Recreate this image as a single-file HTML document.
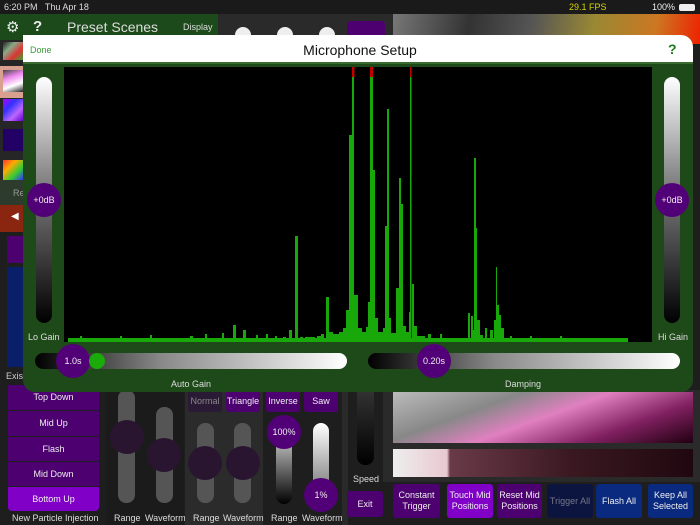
<!DOCTYPE html>
<html><head><meta charset="utf-8"><style>
*{margin:0;padding:0;box-sizing:border-box}
body{width:700px;height:525px;overflow:hidden;background:#1e1e1e;font-family:"Liberation Sans",sans-serif;position:relative;color:#fff}
.a{position:absolute}
.t{position:absolute;font-size:9px;color:#ddd;text-align:center;white-space:nowrap}
.pb{position:absolute;background:#4d0070;color:#eee;font-size:9px;display:flex;align-items:center;justify-content:center;text-align:center;line-height:11px;border-radius:3px}
.knob{position:absolute;border-radius:50%;background:#520078;color:#eee;font-size:9px;display:flex;align-items:center;justify-content:center}
.dk{position:absolute;border-radius:50%;background:#2a1530}
.tr{position:absolute;border-radius:8px;background:#555}
</style></head><body>
<!-- status bar -->
<div class="a" style="left:0;top:0;width:700px;height:14px;background:#1a1a1a"></div>
<div class="t" style="left:4px;top:2px;font-size:9px;color:#ddd">6:20 PM&nbsp;&nbsp; Thu Apr 18</div>
<div class="t" style="left:569px;top:2px;color:#d4d400">29.1 FPS</div>
<div class="t" style="left:652px;top:2px;color:#eee">100%</div>
<div class="a" style="left:679px;top:4px;width:16px;height:7px;background:#eee;border-radius:2px"></div>
<!-- top bg -->
<div class="a" style="left:0;top:14px;width:218px;height:26px;background:#1c4a1a"></div>
<div class="t" style="left:6px;top:18px;font-size:15px;color:#eee">⚙</div>
<div class="t" style="left:33px;top:18px;font-size:15px;color:#eee;font-weight:bold">?</div>
<div class="t" style="left:67px;top:19px;font-size:14px;color:#ddd">Preset Scenes</div>
<div class="t" style="left:183px;top:22px;font-size:9px;color:#ddd">Display</div>
<div class="a" style="left:218px;top:14px;width:175px;height:30px;background:#2a2a2a"></div>
<div class="a" style="left:235px;top:27px;width:16px;height:16px;border-radius:50%;background:#eee"></div>
<div class="a" style="left:277px;top:27px;width:16px;height:16px;border-radius:50%;background:#eee"></div>
<div class="a" style="left:319px;top:27px;width:16px;height:16px;border-radius:50%;background:#eee"></div>
<div class="a" style="left:347px;top:21px;width:38px;height:20px;background:#4d0070;border-radius:3px"></div>
<div class="a" style="left:393px;top:14px;width:307px;height:30px;background:linear-gradient(100deg,#777 0%,#333 25%,#555 45%,#998833 65%,#cc7722 85%,#ee2200 100%)"></div>
<!-- left column bg -->
<div class="a" style="left:0;top:40px;width:23px;height:150px;background:#262626"></div>
<div class="a" style="left:3px;top:42px;width:20px;height:18px;background:linear-gradient(135deg,#222,#8a8,#d33,#3a3)"></div>
<div class="a" style="left:0;top:66px;width:23px;height:32px;background:#d9a090"></div>
<div class="a" style="left:3px;top:70px;width:20px;height:22px;background:linear-gradient(160deg,#444,#e8e,#fff,#222)"></div>
<div class="a" style="left:3px;top:99px;width:20px;height:22px;background:linear-gradient(135deg,#a0f,#33f,#b6f,#60c)"></div>
<div class="a" style="left:3px;top:129px;width:20px;height:22px;background:#206"></div>
<div class="a" style="left:3px;top:160px;width:20px;height:20px;background:linear-gradient(135deg,#f33,#fa0,#3c3,#33f)"></div>
<div class="a" style="left:0;top:180px;width:23px;height:25px;background:#2c3b2c"></div>
<div class="t" style="left:13px;top:188px;color:#999">Re</div>
<div class="a" style="left:0;top:205px;width:23px;height:27px;background:#8a2510"></div>
<div class="t" style="left:11px;top:211px;font-size:10px;color:#fff">◀</div>
<div class="a" style="left:7px;top:236px;width:16px;height:27px;background:#4d0070"></div>
<div class="a" style="left:7px;top:267px;width:16px;height:100px;background:#0a1f6a"></div>
<div class="t" style="left:6px;top:371px;color:#ccc">Exist</div>
<!-- bottom left buttons -->
<div class="pb" style="left:8px;top:385px;width:91px;height:25px;border-radius:0">Top Down</div>
<div class="pb" style="left:8px;top:411px;width:91px;height:25px;border-radius:0">Mid Up</div>
<div class="pb" style="left:8px;top:437px;width:91px;height:24px;border-radius:0">Flash</div>
<div class="pb" style="left:8px;top:462px;width:91px;height:24px;border-radius:0">Mid Down</div>
<div class="pb" style="left:8px;top:487px;width:91px;height:24px;background:#8000c8;border-radius:0 0 4px 4px">Bottom Up</div>
<div class="t" style="left:12px;top:513px;font-size:9px">New Particle Injection</div>
<!-- middle sliders -->
<div class="a" style="left:106px;top:390px;width:78px;height:135px;background:#1b1b1b"></div>
<div class="tr" style="left:118px;top:390px;width:17px;height:113px"></div>
<div class="tr" style="left:156px;top:407px;width:17px;height:96px"></div>
<div class="dk" style="left:110px;top:420px;width:34px;height:34px"></div>
<div class="dk" style="left:147px;top:438px;width:34px;height:34px"></div>
<div class="t" style="left:114px;top:513px">Range</div>
<div class="t" style="left:145px;top:513px">Waveform</div>
<div class="a" style="left:185px;top:390px;width:78px;height:135px;background:#2b2b2b"></div>
<div class="pb" style="left:188px;top:390px;width:34px;height:22px;background:#2a1a35;color:#888">Normal</div>
<div class="pb" style="left:226px;top:390px;width:34px;height:22px">Triangle</div>
<div class="tr" style="left:197px;top:423px;width:17px;height:80px"></div>
<div class="tr" style="left:234px;top:423px;width:17px;height:80px"></div>
<div class="dk" style="left:188px;top:446px;width:34px;height:34px"></div>
<div class="dk" style="left:226px;top:446px;width:34px;height:34px"></div>
<div class="t" style="left:193px;top:513px">Range</div>
<div class="t" style="left:223px;top:513px">Waveform</div>
<div class="pb" style="left:266px;top:390px;width:34px;height:22px">Inverse</div>
<div class="pb" style="left:304px;top:390px;width:34px;height:22px">Saw</div>
<div class="a" style="left:276px;top:430px;width:16px;height:74px;border-radius:8px;background:linear-gradient(#ddd,#000)"></div>
<div class="a" style="left:313px;top:423px;width:16px;height:80px;border-radius:8px;background:linear-gradient(#fff,#666)"></div>
<div class="knob" style="left:267px;top:415px;width:34px;height:34px">100%</div>
<div class="knob" style="left:304px;top:478px;width:34px;height:34px">1%</div>
<div class="t" style="left:271px;top:513px">Range</div>
<div class="t" style="left:302px;top:513px">Waveform</div>
<div class="a" style="left:342px;top:390px;width:6px;height:135px;background:#2a2a2a"></div>
<div class="a" style="left:357px;top:390px;width:17px;height:75px;border-radius:0 0 8px 8px;background:linear-gradient(#333,#000)"></div>
<div class="t" style="left:353px;top:474px">Speed</div>
<div class="pb" style="left:347px;top:491px;width:36px;height:26px">Exit</div>
<!-- right bottom -->
<div class="a" style="left:383px;top:390px;width:317px;height:92px;background:#2a2a2a"></div>
<div class="a" style="left:393px;top:392px;width:300px;height:51px;background:linear-gradient(160deg,#bbb 0%,#888 30%,#e080c0 50%,#802060 75%,#200010 100%)"></div>
<div class="a" style="left:393px;top:449px;width:300px;height:28px;background:linear-gradient(90deg,#eee 0%,#e8c8d0 18%,#6a3a48 19%,#3a1820 60%,#200810 100%)"></div>
<div class="pb" style="left:393px;top:484px;width:47px;height:34px">Constant<br>Trigger</div>
<div class="pb" style="left:447px;top:484px;width:46px;height:34px;background:#8000c8">Touch Mid<br>Positions</div>
<div class="pb" style="left:497px;top:484px;width:45px;height:34px">Reset Mid<br>Positions</div>
<div class="pb" style="left:547px;top:484px;width:46px;height:34px;background:#0c1540;color:#778">Trigger All</div>
<div class="pb" style="left:596px;top:484px;width:46px;height:34px;background:#0a2a80">Flash All</div>
<div class="pb" style="left:648px;top:484px;width:45px;height:34px;background:#0a2a80">Keep All<br>Selected</div>
<!-- modal -->
<div class="a" style="left:23px;top:35px;width:670px;height:357px;background:#1e4a1a;border-radius:0 12px 12px 12px;overflow:hidden">
 <div class="a" style="left:0;top:0;width:670px;height:29px;background:#fff;border-bottom:2px solid #3a6a30"></div>
</div>
<div class="t" style="left:30px;top:45px;color:#3a9a3a;font-size:9px">Done</div>
<div class="t" style="left:280px;top:42px;color:#111;font-size:14px;width:160px">Microphone Setup</div>
<div class="t" style="left:668px;top:41px;color:#1a7a1a;font-size:14px;font-weight:bold">?</div>
<div class="a" style="left:64px;top:67px;width:588px;height:275px;background:#000"></div>
<svg class="a" style="left:64px;top:67px" width="588" height="275" viewBox="64 67 588 275">
<g fill="#19a80a">
<rect x="68" y="338" width="560" height="4"/>
<rect x="80" y="336" width="2" height="6"/><rect x="120" y="336" width="2" height="6"/><rect x="150" y="335" width="2" height="7"/>
<rect x="190" y="336" width="3" height="6"/><rect x="205" y="334" width="2" height="8"/><rect x="222" y="333" width="2" height="9"/>
<rect x="233" y="325" width="3" height="17"/><rect x="243" y="330" width="3" height="12"/><rect x="256" y="335" width="2" height="7"/>
<rect x="266" y="334" width="2" height="8"/><rect x="275" y="336" width="2" height="6"/>
<rect x="283" y="337" width="3" height="5"/><rect x="289" y="330" width="3" height="12"/><rect x="295" y="236" width="3" height="106"/>
<rect x="300" y="337" width="3" height="5"/><rect x="305" y="337" width="10" height="5"/><rect x="317" y="336" width="4" height="6"/><rect x="321" y="334" width="3" height="8"/>
<rect x="326" y="297" width="3" height="45"/><rect x="329" y="332" width="4" height="10"/><rect x="333" y="334" width="6" height="8"/>
<rect x="339" y="332" width="5" height="10"/><rect x="343" y="328" width="4" height="14"/><rect x="346" y="310" width="3" height="32"/>
<rect x="349" y="135" width="4" height="207"/><rect x="352" y="67" width="2" height="275"/><rect x="354" y="295" width="4" height="47"/>
<rect x="358" y="328" width="4" height="14"/><rect x="362" y="332" width="4" height="10"/><rect x="366" y="327" width="3" height="15"/>
<rect x="368" y="302" width="3" height="40"/><rect x="370" y="67" width="3" height="275"/><rect x="373" y="170" width="2" height="172"/>
<rect x="375" y="318" width="3" height="24"/><rect x="378" y="332" width="5" height="10"/><rect x="383" y="328" width="3" height="14"/>
<rect x="385" y="226" width="2" height="116"/><rect x="387" y="109" width="2" height="233"/><rect x="389" y="318" width="2" height="24"/>
<rect x="391" y="333" width="5" height="9"/><rect x="396" y="288" width="3" height="54"/><rect x="399" y="178" width="2" height="164"/><rect x="401" y="204" width="2" height="138"/>
<rect x="403" y="326" width="3" height="16"/><rect x="406" y="332" width="3" height="10"/><rect x="409" y="312" width="2" height="30"/>
<rect x="410" y="67" width="1.5" height="275"/><rect x="412" y="284" width="2" height="58"/><rect x="414" y="326" width="3" height="16"/>
<rect x="417" y="336" width="8" height="6"/><rect x="428" y="334" width="3" height="8"/><rect x="440" y="334" width="2" height="8"/>
<rect x="468" y="313" width="2" height="29"/><rect x="471" y="316" width="2" height="26"/><rect x="472" y="330" width="3" height="12"/>
<rect x="474" y="158" width="2" height="184"/><rect x="476" y="228" width="1" height="114"/><rect x="477" y="320" width="3" height="22"/>
<rect x="480" y="335" width="3" height="7"/><rect x="485" y="328" width="2" height="14"/><rect x="490" y="330" width="3" height="12"/>
<rect x="494" y="320" width="2" height="22"/><rect x="496" y="267" width="1" height="75"/><rect x="497" y="305" width="2" height="37"/>
<rect x="499" y="315" width="2" height="27"/><rect x="501" y="328" width="3" height="14"/><rect x="510" y="336" width="2" height="6"/>
<rect x="530" y="336" width="2" height="6"/><rect x="560" y="336" width="2" height="6"/>
</g>
<g fill="#c00000"><rect x="352" y="67" width="2.5" height="10"/><rect x="370" y="67" width="3" height="10"/><rect x="410" y="67" width="1.5" height="10"/></g>
</svg>
<!-- vertical gain sliders -->
<div class="a" style="left:36px;top:77px;width:16px;height:246px;border-radius:8px;background:linear-gradient(#fff,#888 40%,#000)"></div>
<div class="a" style="left:664px;top:77px;width:16px;height:246px;border-radius:8px;background:linear-gradient(#fff,#888 40%,#000)"></div>
<div class="knob" style="left:27px;top:183px;width:34px;height:34px">+0dB</div>
<div class="knob" style="left:655px;top:183px;width:34px;height:34px">+0dB</div>
<div class="t" style="left:28px;top:332px">Lo Gain</div>
<div class="t" style="left:658px;top:332px">Hi Gain</div>
<!-- horizontal sliders -->
<div class="a" style="left:35px;top:353px;width:312px;height:16px;border-radius:8px;background:linear-gradient(90deg,#000,#888 40%,#fff)"></div>
<div class="a" style="left:368px;top:353px;width:312px;height:16px;border-radius:8px;background:linear-gradient(90deg,#000,#888 40%,#fff)"></div>
<div class="knob" style="left:56px;top:344px;width:34px;height:34px">1.0s</div>
<div class="a" style="left:89px;top:353px;width:16px;height:16px;border-radius:50%;background:#1aaa0a"></div>
<div class="knob" style="left:417px;top:344px;width:34px;height:34px">0.20s</div>
<div class="t" style="left:171px;top:379px">Auto Gain</div>
<div class="t" style="left:505px;top:379px">Damping</div>
</body></html>
